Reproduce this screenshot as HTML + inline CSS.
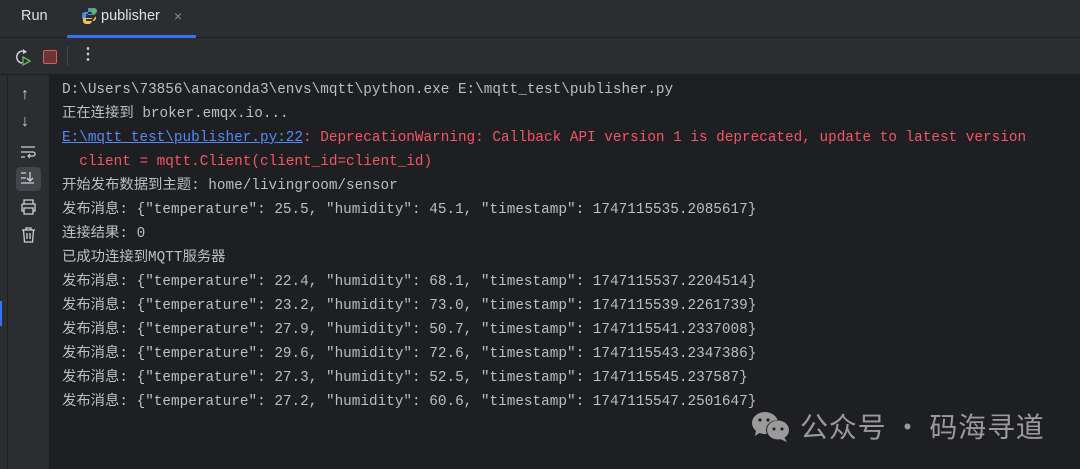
<!DOCTYPE html>
<html><head><meta charset="utf-8"><style>
*{margin:0;padding:0;box-sizing:border-box}
body{width:1080px;height:469px;overflow:hidden;background:#1e1f22;font-family:"Liberation Sans","Noto Sans CJK SC",sans-serif;position:relative}
.top{position:absolute;left:0;top:0;width:1080px;height:38px;background:#2b2d30;border-bottom:1px solid #1e1f22}
.tb{position:absolute;left:0;top:38px;width:1080px;height:37px;background:#2b2d30;border-bottom:1px solid #1e1f22}
.lstrip{position:absolute;left:0;top:75px;width:7px;height:394px;background:#2b2d30}
.gut{position:absolute;left:8px;top:75px;width:41px;height:394px;background:#2b2d30}
.con{position:absolute;left:62px;top:78px;font-family:"Liberation Mono","Noto Sans CJK SC",monospace;font-size:14.35px;line-height:24px;color:#bcbec4;white-space:pre}
.l{color:#548af7;text-decoration:underline}
.ic{position:absolute;color:#ced0d6}
</style></head><body>
<div class="top"></div>
<div style="position:absolute;left:21px;top:8px;color:#dfe1e5;font-size:14.5px">Run</div>
<svg style="position:absolute;left:80px;top:7px" width="18" height="18" viewBox="0 0 18 18"><path d="M8 1h4a3 3 0 0 1 3 3v4H6V7h6V5H5a3 3 0 0 0-3 3v2a3 3 0 0 0 3 3h1v-3a2 2 0 0 1 2-2" fill="#4a90d9"/><path d="M10 17H6a3 3 0 0 1-3-3v-3h9v1H6v2h7a3 3 0 0 0 3-3V9" fill="#f4c542"/><circle cx="14" cy="4" r="3" fill="#5fb85f"/></svg>
<div style="position:absolute;left:101px;top:8px;color:#dfe1e5;font-size:14.5px">publisher</div>
<div style="position:absolute;left:174px;top:8px;color:#8c8f94;font-size:14px">×</div>
<div style="position:absolute;left:67px;top:35px;width:129px;height:3px;background:#3574f0;border-radius:1px"></div>
<div class="tb"></div>
<svg style="position:absolute;left:13px;top:48px" width="18" height="18" viewBox="0 0 18 18"><path d="M13 4A6 6 0 1 0 9 15" fill="none" stroke="#ced0d6" stroke-width="1.5"/><path d="M10 1l4 3-4 2z" fill="#ced0d6"/><path d="M10 9l7 4-7 4z" fill="none" stroke="#5fb85f" stroke-width="1.4"/></svg>
<div style="position:absolute;left:43px;top:50px;width:14px;height:14px;border:1.5px solid #db5c5c;background:#6b3535;border-radius:2px"></div>
<div style="position:absolute;left:67px;top:46px;width:1px;height:20px;background:#43454a"></div>
<div class="ic" style="left:80px;top:44px;font-size:16px;font-weight:bold">⋮</div>
<div class="lstrip"></div><div class="gut"></div>
<div style="position:absolute;left:0;top:301px;width:2px;height:25px;background:#3574f0"></div>
<div class="ic" style="left:21px;top:86px;font-size:16px">↑</div>
<div class="ic" style="left:21px;top:113px;font-size:16px">↓</div>
<svg style="position:absolute;left:20px;top:145px" width="16" height="14"><path d="M1 2h14M1 7h12a2 2 0 0 1 0 4H9M1 12h4" fill="none" stroke="#ced0d6" stroke-width="1.3"/><path d="M10 9l-2 2 2 2" fill="none" stroke="#ced0d6" stroke-width="1.2"/></svg>
<div style="position:absolute;left:16px;top:167px;width:25px;height:24px;background:#43454a;border-radius:4px"></div>
<svg style="position:absolute;left:20px;top:171px" width="17" height="16"><path d="M1 2h5M1 7h5M1 12h13M10 1v9M7 7l3 3 3-3" fill="none" stroke="#ced0d6" stroke-width="1.3"/></svg>
<svg style="position:absolute;left:20px;top:199px" width="17" height="16"><path d="M4 5V1h9v4M2 5h13v7h-2M4 12H2V5M4 9h9v6H4z" fill="none" stroke="#ced0d6" stroke-width="1.3"/></svg>
<svg style="position:absolute;left:21px;top:227px" width="15" height="16"><path d="M1 3h13M5 3V1h5v2M2.5 3l1 12h8l1-12M6 6v6M9 6v6" fill="none" stroke="#ced0d6" stroke-width="1.3"/></svg>
<div class="con">D:\Users\73856\anaconda3\envs\mqtt\python.exe E:\mqtt_test\publisher.py
正在连接到 broker.emqx.io...
<span class="l">E:\mqtt_test\publisher.py:22</span><span style="color:#f75464">: DeprecationWarning: Callback API version 1 is deprecated, update to latest version</span>
<span style="color:#f75464">  client = mqtt.Client(client_id=client_id)</span>
开始发布数据到主题: home/livingroom/sensor
发布消息: {"temperature": 25.5, "humidity": 45.1, "timestamp": 1747115535.2085617}
连接结果: 0
已成功连接到MQTT服务器
发布消息: {"temperature": 22.4, "humidity": 68.1, "timestamp": 1747115537.2204514}
发布消息: {"temperature": 23.2, "humidity": 73.0, "timestamp": 1747115539.2261739}
发布消息: {"temperature": 27.9, "humidity": 50.7, "timestamp": 1747115541.2337008}
发布消息: {"temperature": 29.6, "humidity": 72.6, "timestamp": 1747115543.2347386}
发布消息: {"temperature": 27.3, "humidity": 52.5, "timestamp": 1747115545.237587}
发布消息: {"temperature": 27.2, "humidity": 60.6, "timestamp": 1747115547.2501647}</div>
<svg style="position:absolute;left:751px;top:410px" width="42" height="34" viewBox="0 0 42 34"><ellipse cx="14" cy="13" rx="13" ry="11" fill="#9a9a9a"/><path d="M5 20l-1 6 6-4z" fill="#9a9a9a"/><ellipse cx="27" cy="20" rx="12" ry="10" fill="#1e1f22"/><ellipse cx="27" cy="20" rx="11" ry="9.5" fill="#9a9a9a"/><path d="M33 27l3 5-7-3z" fill="#9a9a9a"/><circle cx="9" cy="10" r="1.6" fill="#1e1f22"/><circle cx="17" cy="10" r="1.6" fill="#1e1f22"/><circle cx="23" cy="19" r="1.5" fill="#1e1f22"/><circle cx="31" cy="19" r="1.5" fill="#1e1f22"/></svg>
<div style="position:absolute;left:800px;top:406px;color:#9a9a9a;font-size:28px;font-family:'Noto Sans CJK SC',sans-serif;letter-spacing:0.8px;white-space:nowrap">公众号 · 码海寻道</div>
</body></html>
